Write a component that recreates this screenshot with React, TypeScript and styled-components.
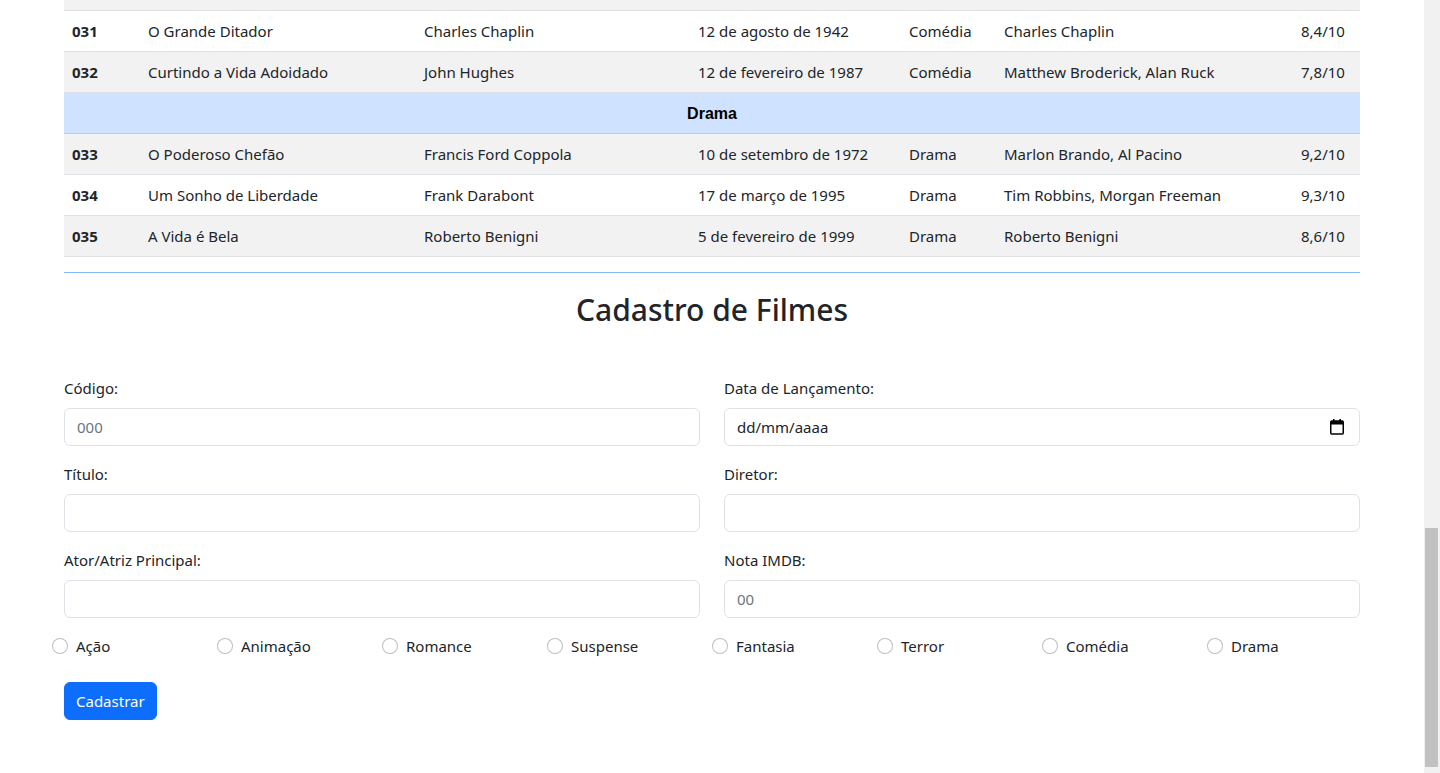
import React from "react";
import styled, { createGlobalStyle } from "styled-components";

const GlobalStyle = createGlobalStyle`
  html, body { margin: 0; padding: 0; }
  body {
    overflow: hidden;
    background: #fff;
    color: #212529;
    font-family: "Noto Sans", "Open Sans", sans-serif;
    font-size: 15px;
    line-height: 24px;
  }
  * { box-sizing: border-box; }
`;

const Page = styled.div`
  display: flex;
  height: 773px;
  overflow: hidden;
`;

const Main = styled.main`
  flex: 1;
  overflow: hidden;
`;

const Container = styled.div`
  max-width: 1320px;
  margin: 0 auto;
  padding: 0 12px;
`;

const Table = styled.table`
  width: 100%;
  border-collapse: collapse;
  table-layout: fixed;
`;

const Row = styled.tr<{ $bg?: string }>`
  background: ${(p) => p.$bg || "#fff"};
`;

const Cell = styled.td<{ $bold?: boolean }>`
  padding: 8px;
  border-bottom: 1px solid #dee2e6;
  font-weight: ${(p) => (p.$bold ? 700 : 400)};
  white-space: nowrap;
  vertical-align: top;
`;

const CutCell = styled.td`
  padding: 0;
  height: 10px;
  border-bottom: 1px solid #dee2e6;
`;

const GroupCell = styled.td`
  padding: 9px 8px 7px;
  height: 40px;
  text-align: center;
  font-family: "Liberation Sans", Arial, sans-serif;
  font-weight: 700;
  font-size: 16px;
  line-height: 24px;
  color: #000;
  border-bottom: 1px solid #bacbe6;
`;

const Divider = styled.div`
  margin-top: 15px;
  height: 1px;
  background: #86b7fe;
`;

const Title = styled.h2`
  margin: 18px 0 47px;
  font-size: 30px;
  line-height: 38px;
  font-weight: 500;
  text-align: center;
`;

const FieldGrid = styled.div`
  display: grid;
  grid-template-columns: 1fr 1fr;
  column-gap: 24px;
  row-gap: 16px;
`;

const Field = styled.div`
  display: flex;
  flex-direction: column;
`;

const Label = styled.label`
  display: block;
  margin-bottom: 8px;
`;

const Input = styled.input`
  height: 38px;
  padding: 6px 12px;
  font: inherit;
  color: #212529;
  border: 1px solid #dee2e6;
  border-radius: 6px;
  background: #fff;
  outline: none;
  &::placeholder { color: #6c757d; }
`;

const DateBox = styled.div`
  height: 38px;
  padding: 6px 15px 6px 12px;
  display: flex;
  align-items: center;
  justify-content: space-between;
  border: 1px solid #dee2e6;
  border-radius: 6px;
  background: #fff;
  color: #212529;
`;

const RadioRow = styled.div`
  display: grid;
  grid-template-columns: repeat(8, 1fr);
  margin: 16px -12px 0;
`;

const RadioItem = styled.div`
  display: flex;
  align-items: center;
  gap: 8px;
  height: 24px;
`;

const Radio = styled.input`
  appearance: none;
  width: 16px;
  height: 16px;
  margin: 0;
  border: 1px solid rgba(0, 0, 0, 0.25);
  border-radius: 50%;
  background: #fff;
`;

const Button = styled.button`
  margin-top: 24px;
  height: 38px;
  padding: 6px 11px;
  font: inherit;
  color: #fff;
  background: #0d6efd;
  border: 1px solid #0d6efd;
  border-radius: 6px;
`;

const Scrollbar = styled.div`
  width: 16px;
  flex: none;
  background: #f1f1f1;
  display: flex;
  flex-direction: column;
  padding: 528px 2px 6px 1px;
`;

const Thumb = styled.div`
  flex: 1;
  background: #c1c1c1;
`;

type Movie = { code: string; title: string; director: string; date: string; genre: string; cast: string; rating: string };

const comedies: Movie[] = [
  { code: "031", title: "O Grande Ditador", director: "Charles Chaplin", date: "12 de agosto de 1942", genre: "Comédia", cast: "Charles Chaplin", rating: "8,4/10" },
  { code: "032", title: "Curtindo a Vida Adoidado", director: "John Hughes", date: "12 de fevereiro de 1987", genre: "Comédia", cast: "Matthew Broderick, Alan Ruck", rating: "7,8/10" },
];

const dramas: Movie[] = [
  { code: "033", title: "O Poderoso Chefão", director: "Francis Ford Coppola", date: "10 de setembro de 1972", genre: "Drama", cast: "Marlon Brando, Al Pacino", rating: "9,2/10" },
  { code: "034", title: "Um Sonho de Liberdade", director: "Frank Darabont", date: "17 de março de 1995", genre: "Drama", cast: "Tim Robbins, Morgan Freeman", rating: "9,3/10" },
  { code: "035", title: "A Vida é Bela", director: "Roberto Benigni", date: "5 de fevereiro de 1999", genre: "Drama", cast: "Roberto Benigni", rating: "8,6/10" },
];

const genres = ["Ação", "Animação", "Romance", "Suspense", "Fantasia", "Terror", "Comédia", "Drama"];

const MovieRow = ({ m, bg }: { m: Movie; bg?: string }) => (
  <Row $bg={bg}>
    <Cell $bold>{m.code}</Cell>
    <Cell>{m.title}</Cell>
    <Cell>{m.director}</Cell>
    <Cell>{m.date}</Cell>
    <Cell>{m.genre}</Cell>
    <Cell>{m.cast}</Cell>
    <Cell>{m.rating}</Cell>
  </Row>
);

const CalendarIcon = () => (
  <svg width="14" height="16" viewBox="0 0 14 16" aria-hidden="true">
    <rect x="3" y="0" width="1.6" height="3" fill="#000" />
    <rect x="9.4" y="0" width="1.6" height="3" fill="#000" />
    <rect x="0.75" y="2" width="12.5" height="13" rx="1" fill="none" stroke="#000" strokeWidth="1.5" />
    <rect x="0.75" y="2" width="12.5" height="3.5" fill="#000" />
  </svg>
);

export default function App() {
  return (
    <>
      <GlobalStyle />
      <Page>
        <Main>
          <Container>
            <Table>
              <colgroup>
                <col style={{ width: 76 }} />
                <col style={{ width: 276 }} />
                <col style={{ width: 274 }} />
                <col style={{ width: 211 }} />
                <col style={{ width: 95 }} />
                <col style={{ width: 297 }} />
                <col style={{ width: 67 }} />
              </colgroup>
              <tbody>
                <Row $bg="#f2f2f2">
                  <CutCell colSpan={7} />
                </Row>
                <MovieRow m={comedies[0]} />
                <MovieRow m={comedies[1]} bg="#f2f2f2" />
                <Row $bg="#cfe2ff">
                  <GroupCell colSpan={7}>Drama</GroupCell>
                </Row>
                <MovieRow m={dramas[0]} bg="#f2f2f2" />
                <MovieRow m={dramas[1]} />
                <MovieRow m={dramas[2]} bg="#f2f2f2" />
              </tbody>
            </Table>
            <Divider />
            <Title>Cadastro de Filmes</Title>
            <form onSubmit={(e) => e.preventDefault()}>
              <FieldGrid>
                <Field>
                  <Label htmlFor="codigo">Código:</Label>
                  <Input id="codigo" placeholder="000" />
                </Field>
                <Field>
                  <Label>Data de Lançamento:</Label>
                  <DateBox>
                    <span>dd/mm/aaaa</span>
                    <CalendarIcon />
                  </DateBox>
                </Field>
                <Field>
                  <Label htmlFor="titulo">Título:</Label>
                  <Input id="titulo" />
                </Field>
                <Field>
                  <Label htmlFor="diretor">Diretor:</Label>
                  <Input id="diretor" />
                </Field>
                <Field>
                  <Label htmlFor="ator">Ator/Atriz Principal:</Label>
                  <Input id="ator" />
                </Field>
                <Field>
                  <Label htmlFor="nota">Nota IMDB:</Label>
                  <Input id="nota" placeholder="00" />
                </Field>
              </FieldGrid>
              <RadioRow>
                {genres.map((g) => (
                  <RadioItem key={g}>
                    <Radio type="radio" name="genero" id={`g-${g}`} />
                    <label htmlFor={`g-${g}`}>{g}</label>
                  </RadioItem>
                ))}
              </RadioRow>
              <Button type="submit">Cadastrar</Button>
            </form>
          </Container>
        </Main>
        <Scrollbar>
          <Thumb />
        </Scrollbar>
      </Page>
    </>
  );
}
